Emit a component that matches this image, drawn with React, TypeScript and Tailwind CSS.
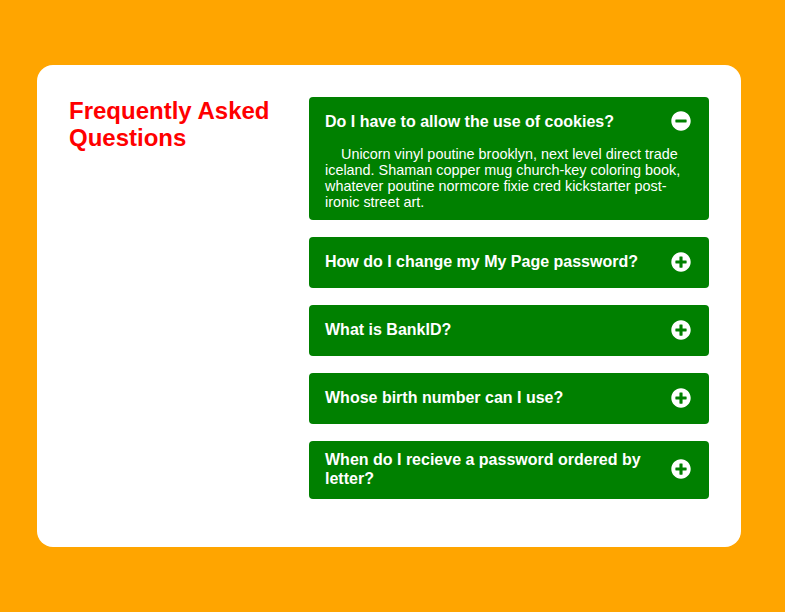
import { FaPlusCircle, FaMinusCircle } from 'react-icons/fa'

const faqs = [
    {
        question: 'Do I have to allow the use of cookies?',
        answer: 'Unicorn vinyl poutine brooklyn, next level direct trade iceland. Shaman copper mug church-key coloring book, whatever poutine normcore fixie cred kickstarter post-ironic street art.',
        open: true
    },
    { question: 'How do I change my My Page password?', answer: '', open: false },
    { question: 'What is BankID?', answer: '', open: false },
    { question: 'Whose birth number can I use?', answer: '', open: false },
    { question: 'When do I recieve a password ordered by letter?', answer: '', open: false },
]

export default function App() {
    return (
        <div className="min-h-screen bg-[#FFA500] flex items-center pl-[37px] font-['Liberation_Sans',Arial,sans-serif]">
            <div className="w-[704px] bg-white rounded-2xl p-8 flex">
                <div className="w-[240px] shrink-0">
                    <h1 className="text-[24px] leading-[27.6px] font-bold text-[#FF0000] pr-4">
                        Frequently Asked Questions
                    </h1>
                </div>
                <div className="w-[400px]">
                    {faqs.map((faq, index) => (
                        <div key={index} className="bg-[#008000] rounded text-white mb-[16.5px]">
                            <div className="flex items-center justify-between min-h-[51.5px] py-[10.5px] pl-4 pr-[18px] gap-4">
                                <span className="text-[16px] leading-[18.4px] font-bold">{faq.question}</span>
                                {faq.open
                                    ? <FaMinusCircle size={20} className="shrink-0 -mt-1" />
                                    : <FaPlusCircle size={20} className="shrink-0 -mt-px" />}
                            </div>
                            {faq.open && (
                                <p className="px-4 pb-[10px] -mt-[2px] text-[14.4px] leading-[16px] indent-4">
                                    {faq.answer}
                                </p>
                            )}
                        </div>
                    ))}
                </div>
            </div>
        </div>
    )
}
